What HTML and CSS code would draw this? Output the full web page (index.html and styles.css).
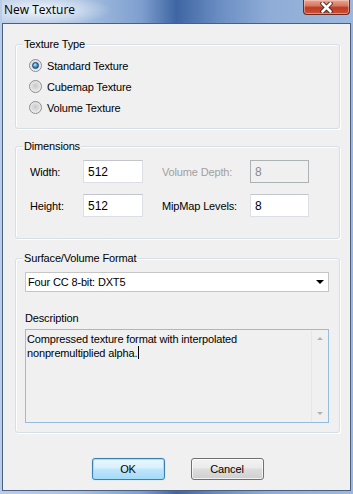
FILE: index.html
```html
<!DOCTYPE html>
<html>
<head>
<meta charset="utf-8">
<link rel="stylesheet" href="styles.css">
</head>
<body>
<div class="win">
  <div class="titlebar">
    <span class="title">New Texture</span>
    <div class="close">
      <svg width="13" height="11" viewBox="0 0 13 11">
        <path d="M2.5 1.5 L10.5 9.5 M10.5 1.5 L2.5 9.5" stroke="#4a1d16" stroke-width="4.4" stroke-linecap="round"/>
        <path d="M2.5 1.5 L10.5 9.5 M10.5 1.5 L2.5 9.5" stroke="#ffffff" stroke-width="2.6" stroke-linecap="round"/>
      </svg>
    </div>
  </div>
  <div class="client">
    <div class="group g1">
      <span class="legend">Texture Type</span>
      <div class="radio-row"><span class="radio on"></span><span>Standard Texture</span></div>
      <div class="radio-row"><span class="radio"></span><span>Cubemap Texture</span></div>
      <div class="radio-row"><span class="radio"></span><span>Volume Texture</span></div>
    </div>
    <div class="group g2">
      <span class="legend">Dimensions</span>
      <div class="dim-row">
        <span class="lbl1">Width:</span>
        <span class="field w1">512</span>
        <span class="lbl2 disabled">Volume Depth:</span>
        <span class="field w2 field-disabled">8</span>
      </div>
      <div class="dim-row">
        <span class="lbl1">Height:</span>
        <span class="field w1">512</span>
        <span class="lbl2">MipMap Levels:</span>
        <span class="field w2">8</span>
      </div>
    </div>
    <div class="group g3">
      <span class="legend">Surface/Volume Format</span>
      <div class="select"><span>Four CC 8-bit: DXT5</span><span class="arrow"></span></div>
      <div class="desc-label">Description</div>
      <div class="textarea">
        <div class="ta-text">Compressed texture format with interpolated<br>nonpremultiplied alpha.<span class="caret"></span></div>
        <div class="scroll"><span class="up"></span><span class="down"></span></div>
      </div>
    </div>
    <div class="buttons">
      <div class="btn def">OK</div>
      <div class="btn">Cancel</div>
    </div>
  </div>
</div>
</body>
</html>
```
FILE: styles.css
```css
html, body {
  margin: 0;
  padding: 0;
}
body {
  width: 353px;
  height: 494px;
  overflow: hidden;
  font-family: "Liberation Sans", Arial, sans-serif;
  font-size: 11px;
  letter-spacing: -0.15px;
  color: #000;
}
.win {
  width: 353px;
  height: 494px;
  box-sizing: border-box;
  padding: 0 2px 3px 2px;
  display: flex;
  flex-direction: column;
  background: linear-gradient(90deg, #b9cde8 0%, #a9c1e1 22%, #7e9fcf 40%, #3f66a3 50%, #6a8dc2 62%, #8eacd6 76%, #9cb8de 100%);
}
.titlebar {
  height: 23px;
  flex: none;
  display: flex;
  align-items: flex-start;
  justify-content: space-between;
  background: radial-gradient(ellipse 70px 16px at 40px 10px, rgba(255,255,255,0.85), rgba(255,255,255,0));
}
.title {
  font-family: "Open Sans", "Noto Sans", sans-serif;
  font-size: 12px;
  letter-spacing: 0;
  line-height: 16px;
  margin: 2px 0 0 2px;
  color: #000;
}
.close {
  width: 47px;
  height: 15px;
  box-sizing: border-box;
  margin-right: 1px;
  border: 1px solid #6a2b22;
  border-top: none;
  border-radius: 0 0 4px 4px;
  background: linear-gradient(#e9a796 0%, #d77862 40%, #bf3b22 55%, #cb5237 100%);
  box-shadow: inset 0 0 0 1px rgba(255, 220, 210, 0.45);
  display: flex;
  align-items: center;
  justify-content: center;
}
.close svg {
  display: block;
}
.client {
  flex: 1;
  background: #f0f0f0;
  border: 1px solid #4b5f80;
  padding: 20px 10px 0 12px;
  display: flex;
  flex-direction: column;
}
.group {
  position: relative;
  box-sizing: border-box;
  width: 325px;
  border: 1px solid #d5dfe5;
  border-radius: 3px;
  box-shadow: inset 1px 1px 0 #fff, 1px 1px 0 #fff;
}
.legend {
  position: absolute;
  top: -8px;
  left: 7px;
  padding: 0 1px;
  line-height: 14px;
  background: #f0f0f0;
}
.g1 {
  height: 85px;
  padding: 10px 0 0 13px;
}
.g2 {
  height: 93px;
  margin-top: 17px;
  padding: 13px 0 0 14px;
  display: flex;
  flex-direction: column;
  gap: 11px;
}
.g3 {
  height: 175px;
  margin-top: 19px;
  padding: 13px 0 0 9px;
}
.radio-row {
  height: 21px;
  display: flex;
  align-items: center;
  gap: 5px;
}
.radio {
  width: 13px;
  height: 13px;
  box-sizing: border-box;
  border-radius: 50%;
  border: 1px solid #8a8c8e;
  background: radial-gradient(circle at 50% 45%, #c8c9ca 0%, #dedede 45%, #f4f4f4 80%);
  display: flex;
  align-items: center;
  justify-content: center;
}
.radio.on::after {
  content: "";
  width: 7px;
  height: 7px;
  box-sizing: border-box;
  border-radius: 50%;
  border: 1px solid #1c3f6e;
  background: radial-gradient(circle at 40% 35%, #c9ecff 0%, #3d9ad6 45%, #0f4e8c 100%);
}
.dim-row {
  height: 23px;
  display: flex;
  align-items: center;
}
.lbl1 {
  width: 53px;
}
.lbl2 {
  width: 88px;
  margin-left: 19px;
}
.disabled {
  color: #a0a0a0;
}
.field {
  height: 23px;
  box-sizing: border-box;
  background: #fff;
  border: 1px solid #dcdfe5;
  border-top-color: #c2c6cc;
  padding-left: 4px;
  font-size: 12px;
  letter-spacing: 0;
  display: flex;
  align-items: center;
}
.w1 {
  width: 60px;
}
.w2 {
  width: 59px;
}
.field-disabled {
  background: #f0f0f0;
  border-color: #adb2b5;
  color: #8a8a8a;
}
.select {
  width: 304px;
  height: 20px;
  box-sizing: border-box;
  background: #fff;
  border: 1px solid #c6c6c6;
  padding: 0 4px 0 2px;
  display: flex;
  align-items: center;
  justify-content: space-between;
}
.arrow {
  width: 0;
  height: 0;
  border-left: 4px solid transparent;
  border-right: 4px solid transparent;
  border-top: 4px solid #000;
}
.desc-label {
  margin-top: 19px;
  line-height: 14px;
}
.textarea {
  margin-top: 4px;
  width: 304px;
  height: 94px;
  box-sizing: border-box;
  border: 1px solid #94bde0;
  background: #f0f0f0;
  display: flex;
}
.ta-text {
  flex: 1;
  padding: 2px 0 0 1px;
  line-height: 14px;
}
.caret {
  display: inline-block;
  width: 1px;
  height: 13px;
  background: #000;
  vertical-align: -2px;
  margin-left: 1px;
}
.scroll {
  width: 16px;
  border-left: 1px solid #e6e6e6;
  display: flex;
  flex-direction: column;
  justify-content: space-between;
  align-items: center;
  padding: 7px 0 7px 0;
}
.up {
  width: 0;
  height: 0;
  border-left: 3px solid transparent;
  border-right: 3px solid transparent;
  border-bottom: 3px solid #b4b4b4;
}
.down {
  width: 0;
  height: 0;
  border-left: 3px solid transparent;
  border-right: 3px solid transparent;
  border-top: 3px solid #b4b4b4;
}
.buttons {
  margin-top: 25px;
  display: flex;
  justify-content: center;
  gap: 26px;
}
.btn {
  width: 73px;
  height: 22px;
  box-sizing: border-box;
  border: 1px solid #707070;
  border-radius: 3px;
  background: linear-gradient(#f2f2f2 0%, #ebebeb 45%, #dddddd 50%, #cfcfcf 100%);
  box-shadow: inset 0 0 0 1px rgba(255,255,255,0.7);
  display: flex;
  align-items: center;
  justify-content: center;
}
.btn.def {
  border-color: #3c7fb1;
  background: linear-gradient(#eaf6fd 0%, #d9f0fc 45%, #bee6fd 50%, #a7d9f5 100%);
  box-shadow: inset 0 0 0 1px #9ee0fb, 0 0 1px #5ab8ea;
}
```
